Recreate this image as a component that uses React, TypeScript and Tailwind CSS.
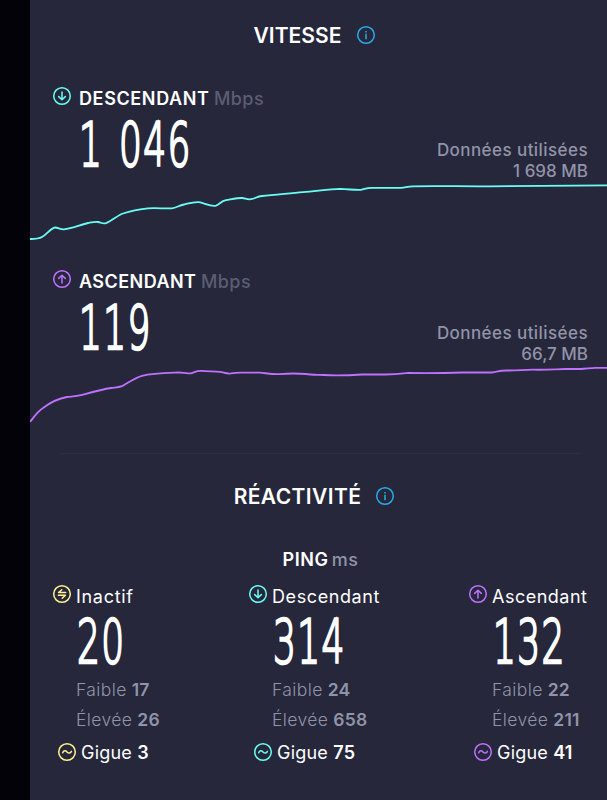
type IconKind = 'down' | 'up' | 'idle' | 'jitter' | 'info'

const iconPaths: Record<IconKind, string> = {
  down: 'M9 5v7.6M5.7 9.6L9 12.7l3.3-3.1',
  up: 'M9 13V5.4M5.7 8.4L9 5.3l3.3 3.1',
  idle: 'M12.7 7.5H5.6L8.8 4.7M5.3 10.3h7.1L9.2 13.3',
  jitter: 'M4.7 9.7C5.6 7.3 7.5 7.2 9 8.9s3.5 1.7 4.4-.5',
  info: 'M9 7.8v5.4M9 4.9v1.5',
}

function Icon({ kind, className }: { kind: IconKind; className: string }) {
  return (
    <svg className={`w-[18px] h-[18px] shrink-0 overflow-visible ${className}`} viewBox="0 0 18 18" fill="none" stroke="currentColor" strokeWidth="1.5">
      <circle cx="9" cy="9" r="8.3" />
      <path d={iconPaths[kind]} strokeLinecap={kind === 'info' ? 'butt' : 'round'} strokeLinejoin="round" />
    </svg>
  )
}

const speeds = [
  {
    label: 'DESCENDANT',
    labelClass: 'w-[130px] tracking-[0.62px]',
    icon: 'down' as const,
    color: 'text-[#6afff3]',
    value: '1 046',
    data: '1 698 MB',
    path: 'M0 58C5 58 9 57.8 12 56C17 53 21 47 25 46.5C28 46.4 30 48.6 34 48.3C42 47.5 51 43.5 58 42C62 41.3 65 40.6 68 41C71 41.5 73 43.2 76 42.2C82 40 88 34 93 32.5C101 30 110 28 118 27.3C128 26.9 134 27.6 142 27.3C146 27 149 24.5 154 23.5C159 22.4 164 20.7 169 21.2C174 22 181 26 186 24.7C190 23 191 20 196 19.2C202 18.2 207 17 212 17C215 17 217 18.8 221 18.2C225 17.6 227 15.5 232 15C245 13.5 260 12.5 273 11.1C287 10 300 8 310 7.9C318 8 325 9.3 331 8.9C335 8.2 336 6.8 342 6.8H371C376 6.5 377 5.4 383 5.3C410 4.6 428 5.6 460 5.3C500 5 540 4.6 577 4.3',
  },
  {
    label: 'ASCENDANT',
    labelClass: 'w-[117px] tracking-[0.45px]',
    icon: 'up' as const,
    color: 'text-[#bf71ff]',
    value: '119',
    data: '66,7 MB',
    path: 'M0 58C4 53 7 48 13 44C21 38 28 34.5 37 33C43 32.4 46 32.5 51 31.2C61 28.5 72 25.4 81 24C85 23.4 88 23.7 92 22.2C99 18.5 105 13.7 112 11.8C123 9.2 137 9 149 8.5C153 8.5 156 10 161 9.3C165 8.3 166 6.7 171 6.9C178 7.6 184 7.2 190 7.9C194 8.5 197 10.1 201 9.4C207 8.1 211 8.7 218 8.6H230C237 9.3 242 10.5 250 10.1C260 9.2 269 9.4 276 10C280 10.8 287 10.7 294 11C308 11.8 321 11.2 332 10.5H355C366 10.5 371 9.8 378 9C395 9.2 418 9 433 8.5H462C467 8 468 6.6 477 6.5C487 6.7 494 5.7 503 5.7C520 6 527 5 536 5H551C557 4.7 561 3.8 566 3.9H577',
  },
]

const pings = [
  { label: 'Inactif', labelClass: 'tracking-[0.7px]', icon: 'idle' as const, color: 'text-[#fff38e]', value: '20', low: '17', high: '26', jitter: '3' },
  { label: 'Descendant', labelClass: 'tracking-[0.6px]', icon: 'down' as const, color: 'text-[#6afff3]', value: '314', low: '24', high: '658', jitter: '75' },
  { label: 'Ascendant', labelClass: 'tracking-[0.5px]', icon: 'up' as const, color: 'text-[#bf71ff]', value: '132', low: '22', high: '211', jitter: '41' },
]

function BigNumber({ value }: { value: string }) {
  return (
    <span className="block w-0 h-[62px] origin-left scale-x-[0.6] whitespace-pre font-['DejaVu_Sans'] font-extralight text-[60px] leading-[62px] tracking-[2.2px] [word-spacing:5px] text-white [-webkit-text-stroke:2.6px_white]">
      {value}
    </span>
  )
}

function Title({ children, className }: { children: string; className: string }) {
  return (
    <div className="flex items-center justify-center h-[30px] pr-[9px] gap-[15px]">
      <h2 className={`pt-px text-[21px] leading-[30px] font-semibold text-white ${className}`}>{children}</h2>
      <Icon kind="info" className="text-[#29abe8]" />
    </div>
  )
}

export default function App() {
  return (
    <div className="flex h-[800px] w-[607px] overflow-hidden bg-[#020208] font-['Inter','Liberation_Sans',sans-serif]">
      <main className="ml-[30px] w-[577px] bg-[#26273b] pt-5">
        <Title className="tracking-[0.05px]">VITESSE</Title>

        {/* Speed */}
        <div className="pt-[30px]">
          {speeds.map(s => (
            <section key={s.label} className="h-[183px]">
              <div className="flex items-center h-[34px] pt-[2px] pl-[23px]">
                <Icon kind={s.icon} className={`${s.color} mb-1`} />
                <span className={`${s.labelClass} ml-2 whitespace-nowrap text-[18px] font-semibold text-white`}>{s.label}</span>
                <span className="ml-[5px] text-[18px] font-medium tracking-[0.4px] text-[#5c5d73]">Mbps</span>
              </div>
              <div className="flex justify-between h-[67px] pl-[49px] pr-[19px]">
                <BigNumber value={s.value} />
                <div className="pt-[26px] text-right text-[17px] leading-[20.5px] font-medium text-[#9193a8]">
                  <p className="tracking-[0.43px]">Données utilisées</p>
                  <p>{s.data}</p>
                </div>
              </div>
              <svg className={`block w-[577px] h-[60px] ${s.color}`} viewBox="0 0 577 60" fill="none">
                <path d={s.path} stroke="currentColor" strokeWidth="1.8" />
              </svg>
            </section>
          ))}
        </div>

        <hr className="mt-[7px] ml-[30px] mr-[26px] border-t border-[#2d2e42]" />

        {/* Reactivity */}
        <div className="pt-[27px]">
          <Title className="tracking-[0.4px]">RÉACTIVITÉ</Title>
        </div>
        <p className="mt-[35px] h-[27px] text-center text-[18px] leading-[28px] font-semibold tracking-[0.6px] text-white pl-[4px]">
          PING<span className="ml-[3px] font-medium text-[#9193a8]">ms</span>
        </p>

        <div className="mt-[9px] flex pl-[23px]">
          {pings.map((p, i) => (
            <section key={p.label} className={i === 0 ? 'w-[196px]' : i === 1 ? 'w-[220px]' : 'w-[137px]'}>
              <div className="flex items-center h-[28px]">
                <Icon kind={p.icon} className={`${p.color} mb-1`} />
                <span className={`${p.labelClass} ml-[5px] text-[18px] text-white`}>{p.label}</span>
              </div>
              <div className="pl-[23px] text-[17.5px] font-light text-[#9193a8]">
                <div className="h-[65px] pt-px pl-px">
                  <BigNumber value={p.value} />
                </div>
                <p className="leading-[29.5px]"><span className="tracking-[0.4px]">Faible</span> <b className="font-semibold tracking-[0.2px]">{p.low}</b></p>
                <p className="leading-[29.5px]"><span className="tracking-[0.4px]">Élevée</span> <b className="font-semibold tracking-[0.2px]">{p.high}</b></p>
              </div>
              <div className="mt-1 flex items-center h-[28px] pl-[5px]">
                <Icon kind="jitter" className={p.color} />
                <span className="ml-[5px] text-[18px] tracking-[0.2px] text-white">Gigue <b className="font-semibold">{p.jitter}</b></span>
              </div>
            </section>
          ))}
        </div>
      </main>
    </div>
  )
}
